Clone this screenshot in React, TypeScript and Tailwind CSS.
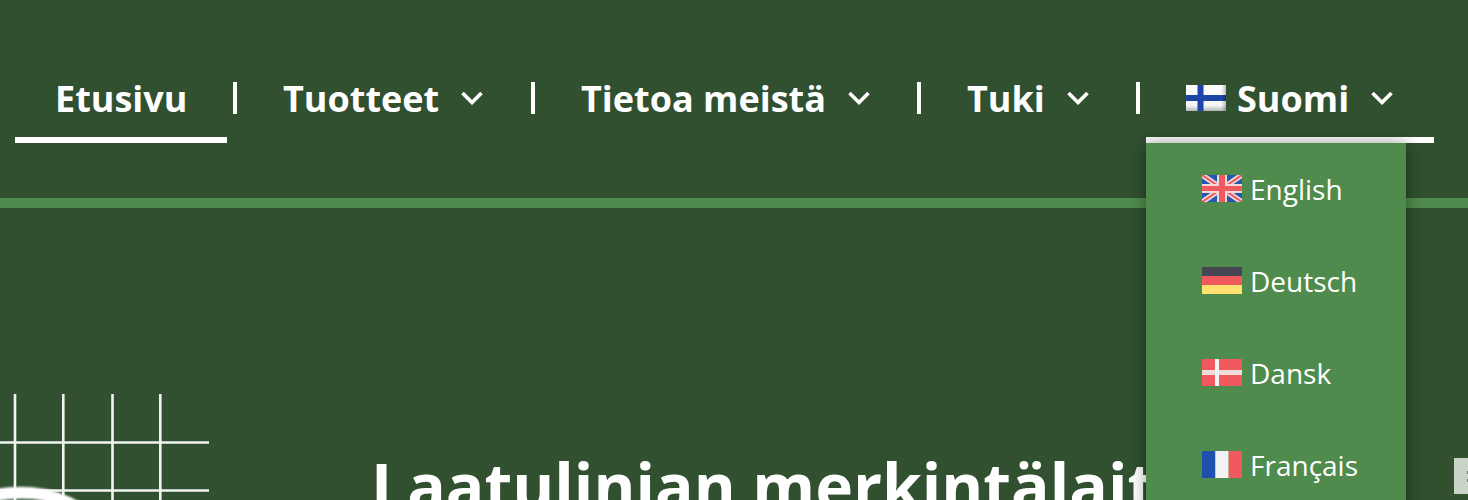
import React from "react";

const font = { fontFamily: '"Open Sans", sans-serif' };

function Chevron() {
  return (
    <svg width="22" height="14" viewBox="0 0 22 14" fill="none" stroke="white" strokeWidth="3.6" className="block mb-[2px]">
      <path d="M1.500 2 L11 11.500 L20.500 2" />
    </svg>
  );
}

function Sep() {
  return (
    <div className="h-[70px] flex items-center">
      <div className="w-1 h-[32px] bg-white mx-[6px]" />
    </div>
  );
}

function Fi() {
  return (
    <svg width="40" height="26" viewBox="0 0 40 26" className="block mb-[2px]">
      <defs>
        <linearGradient id="fiw" x1="0" y1="0" x2="0" y2="1">
          <stop offset="0" stopColor="#ffffff" />
          <stop offset="0.78" stopColor="#f6f6f6" />
          <stop offset="1" stopColor="#b5b5b5" />
        </linearGradient>
        <linearGradient id="fir" x1="0" y1="0" x2="1" y2="0">
          <stop offset="0.88" stopColor="#000000" stopOpacity="0" />
          <stop offset="1" stopColor="#000000" stopOpacity="0.25" />
        </linearGradient>
        <filter id="fib" x="-10%" y="-10%" width="120%" height="120%">
          <feGaussianBlur stdDeviation="0.7" />
        </filter>
      </defs>
      <rect width="40" height="26" fill="url(#fiw)" />
      <g filter="url(#fib)">
        <rect x="-2" y="10" width="44" height="6" fill="#1a45a8" />
        <rect x="11.500" y="-2" width="6" height="30" fill="#1a45a8" />
      </g>
      <rect width="40" height="26" fill="url(#fir)" />
    </svg>
  );
}

function Gb() {
  return (
    <svg width="40" height="27" viewBox="0 0 40 27" className="block">
      <rect width="40" height="27" fill="#2458b0" />
      <path d="M0 0 L40 27 M40 0 L0 27" stroke="#f1d8da" strokeWidth="5.500" />
      <path d="M0 0 L40 27 M40 0 L0 27" stroke="#f05a5f" strokeWidth="2" />
      <rect x="15" width="10" height="27" fill="#f1d8da" />
      <rect y="9" width="40" height="9" fill="#f1d8da" />
      <rect x="17" width="6" height="27" fill="#f05a5f" />
      <rect y="11" width="40" height="5" fill="#f05a5f" />
    </svg>
  );
}

function De() {
  return (
    <svg width="40" height="27" viewBox="0 0 40 27" className="block">
      <rect width="40" height="9" fill="#464655" />
      <rect y="9" width="40" height="9" fill="#f05a5f" />
      <rect y="18" width="40" height="9" fill="#ffe070" />
    </svg>
  );
}

function Dk() {
  return (
    <svg width="40" height="27" viewBox="0 0 40 27" className="block">
      <rect width="40" height="27" fill="#f05a5f" />
      <rect y="11" width="40" height="5" fill="#f1dcdc" />
      <rect x="13" width="4" height="27" fill="#f5f5f5" />
    </svg>
  );
}

function Fr() {
  return (
    <svg width="40" height="27" viewBox="0 0 40 27" className="block">
      <rect width="13.300" height="27" fill="#2050ad" />
      <rect x="13.300" width="13.400" height="27" fill="#f2f2f5" />
      <rect x="26.700" width="13.300" height="27" fill="#f05a5f" />
    </svg>
  );
}

function LangRow({ flag, label }: { flag: React.ReactNode; label: string }) {
  return (
    <div className="h-[92px] flex items-center pl-[56px] text-white text-[28px] font-normal">
      <span className="mr-[8px] mb-[1px]">{flag}</span>
      <span>{label}</span>
    </div>
  );
}

function Label({ children }: { children: string }) {
  return <span className="text-white text-[36px] font-bold whitespace-nowrap">{children}</span>;
}

export default function App() {
  return (
    <div style={font} className="relative h-[500px] w-[1468px] overflow-hidden bg-[#305030]">
      <header className="h-[198px] pl-[15px] pt-[63px] flex items-start">
        <div className="flex items-center h-[80px] pb-[2px] pl-[40px] w-[212px] border-b-[6px] border-white">
          <Label>Etusivu</Label>
        </div>
        <Sep />
        <div className="flex items-center h-[80px] pb-[2px] pl-[40px] w-[282px] border-b-[6px] border-transparent">
          <Label>Tuotteet</Label>
          <span className="ml-[22px]"><Chevron /></span>
        </div>
        <Sep />
        <div className="flex items-center h-[80px] pb-[2px] pl-[40px] w-[370px] border-b-[6px] border-transparent">
          <Label>Tietoa meistä</Label>
          <span className="ml-[22px]"><Chevron /></span>
        </div>
        <Sep />
        <div className="flex items-center h-[80px] pb-[2px] pl-[40px] w-[203px] border-b-[6px] border-transparent">
          <Label>Tuki</Label>
          <span className="ml-[22px]"><Chevron /></span>
        </div>
        <Sep />
        <div className="flex items-center h-[80px] pb-[2px] pl-[40px] w-[288px] border-b-[6px] border-white">
          <span className="mr-[11px]"><Fi /></span>
          <Label>Suomi</Label>
          <span className="ml-[22px]"><Chevron /></span>
        </div>
      </header>
      <div className="h-[10px] bg-[#4f8b4c]" />
      <main className="relative">
        <svg width="209" height="106" viewBox="0 0 209 106" className="absolute left-0 top-[186px]" fill="none">
          <defs>
            <filter id="blob" x="-20%" y="-50%" width="140%" height="200%">
              <feGaussianBlur stdDeviation="0.8" />
            </filter>
          </defs>
          <path d="M15 0V106M63.300 0V106M112.500 0V106M160.300 0V106M0 48.500H209M0 96.500H209" stroke="#f2f4f2" strokeWidth="2.600" />
          <path d="M-12 103 C14 96 50 96 78 114" stroke="#ffffff" strokeWidth="12" filter="url(#blob)" />
        </svg>
        <h1 className="absolute left-[371px] top-[238px] text-white text-[64px] leading-[80px] font-bold whitespace-nowrap">
          Laatulinjan merkintälaitteet
        </h1>
      </main>
      <div className="absolute right-0 top-[458px] w-[14px] h-[36px] bg-[#c8d4c8] overflow-hidden">
        <div className="absolute right-0 top-[13px] w-[1px] h-[3px] bg-[#777777]" />
        <div className="absolute right-0 top-[21px] w-[1px] h-[3px] bg-[#777777]" />
      </div>
      <div className="absolute left-[1146px] top-[143px] w-[260px] h-[400px] bg-[#4f8b4c] shadow-[0_0_16px_rgba(0,0,0,0.4)]">
        <LangRow flag={<Gb />} label="English" />
        <LangRow flag={<De />} label="Deutsch" />
        <LangRow flag={<Dk />} label="Dansk" />
        <LangRow flag={<Fr />} label="Français" />
      </div>
    </div>
  );
}
